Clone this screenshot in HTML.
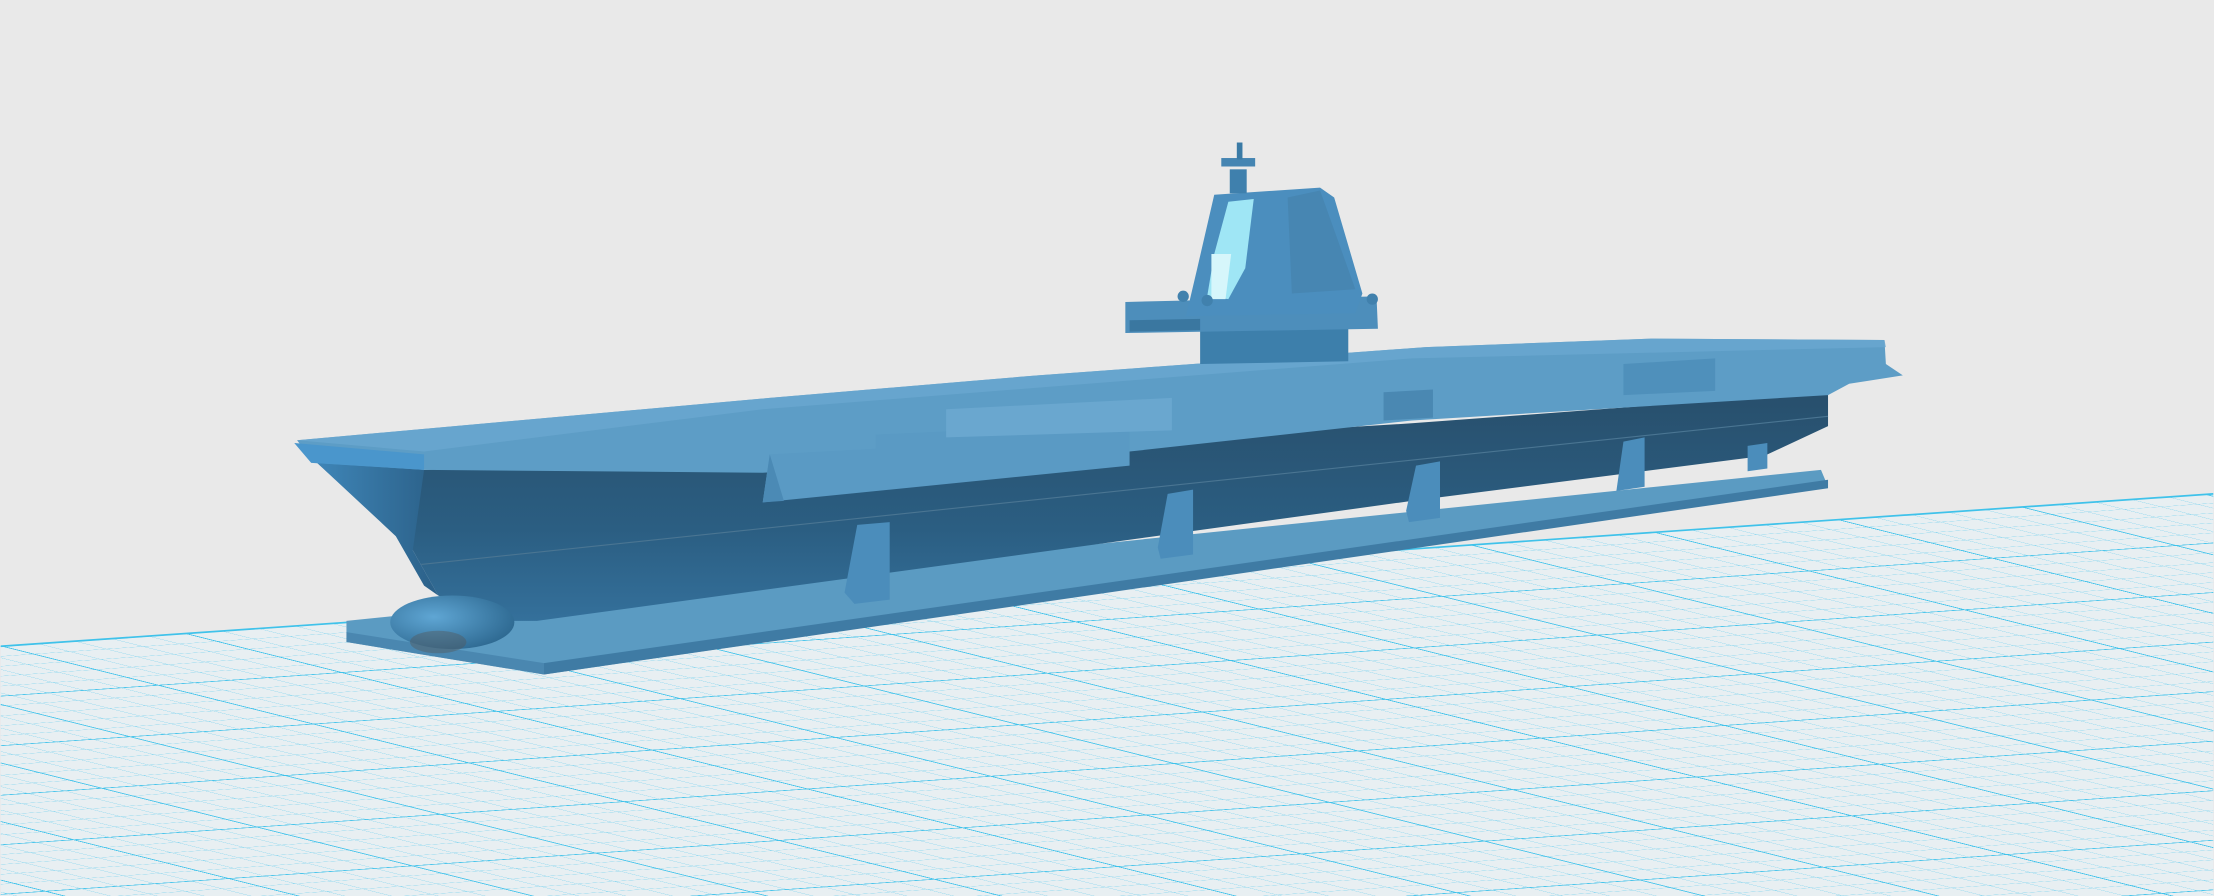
<!DOCTYPE html>
<html><head><meta charset="utf-8"><style>
html,body{margin:0;padding:0;background:#e9e9e9;overflow:hidden}
svg{display:block}
</style></head><body>
<svg width="2214" height="896" viewBox="0 0 1568 635" xmlns="http://www.w3.org/2000/svg">
<defs>
<pattern id="minor" width="10" height="10" patternUnits="userSpaceOnUse" patternTransform="matrix(2.6,-0.18,2.2,0.55,0,458)">
<path d="M0 0H10M0 0V10" stroke="#92d8ef" stroke-width="0.7" fill="none"/>
</pattern>
<pattern id="major" width="50" height="50" patternUnits="userSpaceOnUse" patternTransform="matrix(2.6,-0.18,2.2,0.55,0,458)">
<path d="M0 0H50M0 0V50" stroke="#3fc2ea" stroke-width="1.4" fill="none"/>
</pattern>
<linearGradient id="hull" x1="0" y1="0" x2="0" y2="1">
<stop offset="0" stop-color="#284f6c"/><stop offset="0.6" stop-color="#2b5e82"/><stop offset="1" stop-color="#34709b"/>
</linearGradient>
<linearGradient id="bow" x1="0" y1="0" x2="1" y2="0">
<stop offset="0" stop-color="#3f86b8"/><stop offset="1" stop-color="#2b6088"/>
</linearGradient>
<radialGradient id="bulb" cx="0.35" cy="0.4" r="0.7">
<stop offset="0" stop-color="#5fa6d4"/><stop offset="1" stop-color="#2d6890"/>
</radialGradient>
</defs>
<rect width="1568" height="635" fill="#e9e9e9"/>
<polygon points="0,458 1568,350 1568,635 0,635" fill="#e8eff2"/>
<polygon points="0,458 1568,350 1568,635 0,635" fill="url(#minor)"/>
<polygon points="0,458 1568,350 1568,635 0,635" fill="url(#major)"/>
<line x1="0" y1="458" x2="1568" y2="350" stroke="#3fc2ea" stroke-width="1.2"/>
<!-- base stand -->
<polygon points="245,440 1290,333 1295,345 385,478 245,455" fill="#5b9bc2"/>
<polygon points="245,455 385,478 385,470 245,448" fill="#4a87b0"/>
<polygon points="385,470 1295,340 1295,346 385,478" fill="#3f7ba4"/>
<!-- hull -->
<polygon points="222,326 300,333 700,318 1000,300 1295,278 1295,302 1250,323 1000,355 600,410 380,440 348,440 310,422 292,390" fill="url(#hull)"/>
<polygon points="222,326 300,333 292,390 310,422 300,415 280,380" fill="url(#bow)"/>
<line x1="298" y1="400" x2="1295" y2="295" stroke="#4a7592" stroke-width="0.8"/>
<ellipse cx="320" cy="441" rx="44" ry="19" fill="url(#bulb)"/>
<ellipse cx="310" cy="455" rx="20" ry="8" fill="#555" opacity="0.4"/>
<!-- supports -->
<polygon points="607,372 630,370 630,425 605,428 598,420" fill="#4b8dbb"/>
<polygon points="827,350 845,347 845,393 822,396 820,388" fill="#4b8dbb"/>
<polygon points="1003,330 1020,327 1020,367 998,370 996,362" fill="#4b8dbb"/>
<polygon points="1150,313 1165,310 1165,345 1145,348" fill="#4b8dbb"/>
<polygon points="1238,316 1252,314 1252,332 1238,334" fill="#4b8dbb"/>
<!-- deck -->
<polygon points="210,312 545,282 735,266 1010,246 1170,240 1335,241 1336,258 1348,266 1310,272 1295,280 1000,298 800,320 540,335 300,333 222,328" fill="#5d9dc6"/>
<polygon points="210,312 545,282 735,266 1010,246 1170,240 1335,241 1336,246 1000,254 540,290 300,320" fill="#6aa8d0" opacity="0.8"/>
<polygon points="208,314 300,322 300,333 220,328" fill="#4a96cc"/>
<!-- side blocks -->
<polygon points="545,322 620,318 620,308 800,300 800,330 700,340 540,356" fill="#5a9ac4"/>
<polygon points="545,322 555,355 540,356" fill="#4b8ab5"/>
<polygon points="670,290 830,282 830,305 670,310" fill="#6aa7cf"/>
<polygon points="1150,258 1215,254 1215,277 1150,280" fill="#4f90bb"/>
<polygon points="980,278 1015,276 1015,296 980,298" fill="#4a88b2"/>
<!-- island -->
<polygon points="850,225 955,222 955,256 850,258" fill="#3d7fab"/>
<polygon points="797,214 975,210 976,233 797,236" fill="#4d8ebb"/>
<polygon points="800,227 850,226 850,234 800,235" fill="#3a77a0"/>
<polygon points="860,138 935,133 945,140 965,208 960,222 840,224 848,190" fill="#4b8ebe"/>
<polygon points="870,143 888,141 882,190 870,212 855,210 860,180" fill="#9fe6f5"/>
<polygon points="858,180 872,180 868,212 858,212" fill="#d6f6fb"/>
<polygon points="912,140 935,135 960,205 915,208" fill="#4786b2"/>
<rect x="871" y="120" width="12" height="17" fill="#3f80ad"/>
<rect x="865" y="112" width="24" height="6" fill="#4585b2"/>
<rect x="876" y="101" width="4" height="12" fill="#3a7aa5"/>
<circle cx="838" cy="210" r="4" fill="#4181ad"/>
<circle cx="855" cy="213" r="4" fill="#4181ad"/>
<circle cx="972" cy="212" r="4" fill="#4181ad"/>
</svg>
</body></html>
